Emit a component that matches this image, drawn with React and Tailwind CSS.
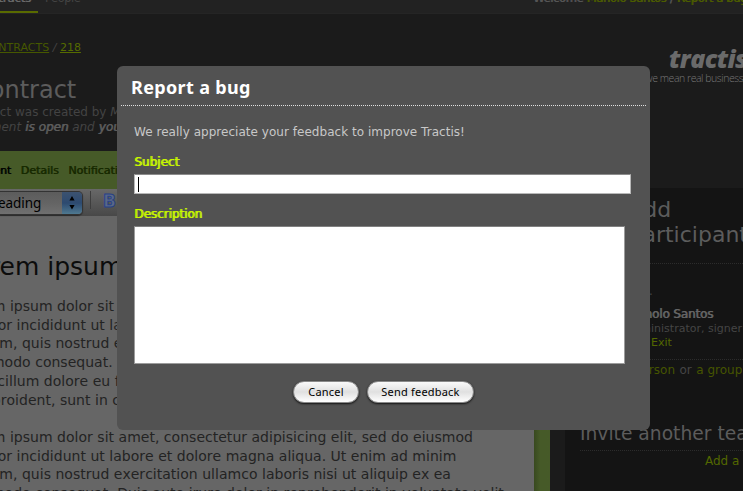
const faux = "[text-shadow:0.7px_0_0_currentColor]";

function Dotted({ className = "" }) {
  return <div className={`h-px border-t border-dotted border-[#2c2c2c] ${className}`} />;
}

function TopBar() {
  return (
    <header className="flex h-[14px] items-start justify-between overflow-hidden border-b border-[#252525] bg-[#222] text-[11.4px] leading-[16px]">
      <nav className="flex h-[13px] whitespace-nowrap">
        <div className="h-[13px] w-[38px] border-b-2 border-[#596b00]">
          <div className={`-mt-[10px] -ml-[24px] text-[#686868] ${faux}`}>Contracts</div>
        </div>
        <div className="-mt-[10px] ml-[7px] tracking-[-0.4px] text-[#444]">People</div>
      </nav>
      <div
        className={`-mt-[10px] flex w-[210px] gap-[3.5px] whitespace-nowrap tracking-[-0.3px] text-[#555] ${faux}`}
      >
        <span>Welcome</span>
        <span className="text-[#4c5c00]">Manolo Santos</span>
        <span>/</span>
        <span className="text-[#4c5c00]">Report a bug</span>
      </div>
    </header>
  );
}

function Masthead() {
  return (
    <section className="flex h-[137px] justify-between whitespace-nowrap">
      <div className="pt-[26px]">
        <div className="-ml-[18px] flex gap-[3.5px] text-[11px] leading-[16px] text-[#444]">
          <a className="text-[#465800] underline">CONTRACTS</a>
          <span className="italic">/</span>
          <a className="text-[#566c00] underline">218</a>
        </div>
        <h1 className="mt-[20px] -ml-[27px] text-[24px] leading-[28px] text-[#5c5c5c]">Contract</h1>
        <p className="-ml-[67px] pt-px text-[12px] leading-[15px] text-[#434343]">
          This contract was created by <i className="text-[#444]">Manolo</i>
        </p>
        <p className="-ml-[41px] text-[12px] leading-[15px] text-[#434343] italic">
          Document <span className={`text-[#5c5c5c] ${faux}`}>is open</span> and{" "}
          <span className={`text-[#5c5c5c] ${faux}`}>you</span>
        </p>
      </div>
      <div className="w-[98px] pt-[30px] font-['Open_Sans',sans-serif]">
        <div className="ml-[24px] text-[25px] leading-[28px] font-extrabold tracking-[-0.6px] text-[#6a6a6a] italic">
          tractis
        </div>
        <div className="-mt-px text-[10.5px] leading-[14px] font-light tracking-[-0.45px] text-[#777]">
          we mean real business
        </div>
      </div>
    </section>
  );
}

function Toolbar() {
  return (
    <div className="flex h-[27px] items-start bg-linear-to-b from-[#686868] to-[#484848] pt-[2px]">
      <div className="flex h-[24px] w-[83px] overflow-hidden rounded-r-[5px] border border-l-0 border-[#333] bg-linear-to-b from-[#5c5c5c] via-[#646464] to-[#707070] shadow-[0_1px_1px_#2b2b2b]">
        <div className="-ml-[12px] w-[74px] font-['Noto_Sans',sans-serif] text-[13.5px] leading-[23px] tracking-[-0.05px] text-black">
          Heading
        </div>
        <div className="flex flex-1 items-center justify-center bg-linear-to-b from-[#3c5270] via-[#2d4a70] to-[#4f7990]">
          <svg width="6" height="14" viewBox="0 0 6 14" fill="#000">
            <path d="M3 0 5.6 4.6H.4zM3 13.6 5.6 9H.4z" />
          </svg>
        </div>
      </div>
      <div className="ml-[7px] h-[18px] w-px bg-[#3d3d3d]" />
      <div className="ml-[12px] text-[17px] leading-[20px] font-bold text-[#5a6987] [-webkit-text-stroke:1px_#27418a]">
        B
      </div>
    </div>
  );
}

const lines = [
  "Lorem ipsum dolor sit amet, consectetur adipisicing elit, sed do eiusmod",
  "tempor incididunt ut labore et dolore magna aliqua. Ut enim ad minim",
  "veniam, quis nostrud exercitation ullamco laboris nisi ut aliquip ex ea",
  "commodo consequat. Duis aute irure dolor in reprehenderit in voluptate velit",
  "esse cillum dolore eu fugiat nulla pariatur. Excepteur sint occaecat cupidatat",
  "non proident, sunt in culpa qui officia deserunt mollit anim id est laborum.",
];

function Paragraph({ text }) {
  return (
    <p className="mb-[18.7px]">
      {text.map((line) => (
        <span key={line} className="block">
          {line}
        </span>
      ))}
    </p>
  );
}

function Editor() {
  return (
    <main className="flex w-[550px] flex-col">
      <div
        className={`flex h-[38px] shrink-0 gap-[9.5px] bg-[#465a28] pt-[12px] text-[11px] leading-[16px] text-[#172900] ${faux}`}
      >
        <span className="-ml-[46px] w-[57px] text-right text-black">Document</span>
        <span>Details</span>
        <span>Notifications</span>
      </div>
      <div className="flex min-h-0 flex-1">
        <div className="w-[534px] overflow-hidden bg-[#666]">
          <Toolbar />
          <div className="-ml-[39px] pt-[35px] whitespace-nowrap">
            <h2 className="text-[25px] leading-[32px] text-[#0c0c0c]">Lorem ipsum</h2>
            <div className="mt-[14px] text-[14px] leading-[18.7px] tracking-[0.02px] text-[#232323] [font-kerning:none]">
              <Paragraph text={lines} />
              <Paragraph text={lines.slice(0, 4)} />
            </div>
          </div>
        </div>
        <div className="w-[16px] bg-linear-to-r from-[#38491f] to-[#465a28] to-40%" />
      </div>
    </main>
  );
}

function Sidebar() {
  return (
    <aside className="mt-[37px] ml-[15px] w-[178px] overflow-hidden bg-[#141414] pt-[9px] pl-[15px] text-[12px] leading-[16px] whitespace-nowrap text-[#454545]">
      <h3 className="pl-[48.5px] text-[22px] leading-[25px] text-[#5c5c5c]">
        Add
        <br />
        participants
      </h3>
      <Dotted className="mt-[16px]" />
      <div className="mt-[19px] pl-[69px]">.</div>
      <div className={`mt-[7px] pl-[47px] tracking-[-0.15px] text-[#656565] ${faux}`}>Manolo Santos</div>
      <div className="pl-[46px] text-[11px] leading-[14px]">Administrator, signer</div>
      <div className="pl-[71px] text-[11px] leading-[14px] text-[#536700]">Exit</div>
      <Dotted className="mt-[9px]" />
      <div className="mt-[2px] pl-[29px] text-[#465500]">
        <span className="inline-block w-[66px] text-right">a person</span>
        <span className="px-[4.5px] text-[#454545]">or</span>
        <span>a group</span>
      </div>
      <h3 className="mt-[44px] text-[18.7px] leading-[24px] text-[#5c5c5c]">Invite another team</h3>
      <Dotted className="mt-[4px]" />
      <div className="mt-[2px] pl-[125px] text-[#536700]">Add a</div>
    </aside>
  );
}

function AquaButton({ children, className }) {
  return (
    <button
      className={`h-[22px] rounded-full border border-[#8a8a8a] bg-linear-to-b from-[#fafafa] via-[#e0e0e0] to-white pb-px font-['Noto_Sans',sans-serif] text-[11px] leading-[20px] tracking-[0.2px] text-black shadow-[0_1px_2px_#151515] ${className}`}
    >
      {children}
    </button>
  );
}

function BugDialog() {
  return (
    <div className="absolute top-[66px] left-[117px] h-[364px] w-[533px] rounded-[6px] bg-[#525252] px-[4px] pt-[9px]">
      <h2 className="border-b border-dotted border-[#e0e0e0] pb-[6px] pl-[10px] font-['Noto_Sans',sans-serif] text-[18px] leading-[24px] font-bold tracking-[0.35px] text-white">
        Report a bug
      </h2>
      <form className="flex flex-col items-start pt-[18px] pl-[13px] text-[12px] leading-[16px]">
        <p className="tracking-[0.03px] text-[#c8c8c8]">
          We really appreciate your feedback to improve Tractis!
        </p>
        <label className="mt-[14px] text-[#c8f500] [text-shadow:1px_0_0_currentColor]">Subject</label>
        <div className="mt-[4px] h-[20px] w-[497px] border border-[#b8b8b8] border-t-[#8c8c8c] bg-white pt-[1.5px] pl-[3px]">
          <div className="h-[15px] w-px bg-black" />
        </div>
        <label className="mt-[12px] tracking-[-0.05px] text-[#c8f500] [text-shadow:1px_0_0_currentColor]">
          Description
        </label>
        <div className="mt-[4px] h-[138px] w-[491px] border border-[#9c9c9c] border-t-[#808080] bg-white" />
        <div className="mt-[16.5px] ml-[159px] flex gap-[8px]">
          <AquaButton className="w-[66px]">Cancel</AquaButton>
          <AquaButton className="w-[107px]">Send feedback</AquaButton>
        </div>
      </form>
    </div>
  );
}

export default function App() {
  return (
    <div className="relative flex h-[491px] w-[743px] flex-col overflow-hidden bg-[#1b1b1b] font-['DejaVu_Sans',sans-serif]">
      <TopBar />
      <Masthead />
      <div className="flex min-h-0 flex-1">
        <Editor />
        <Sidebar />
      </div>
      <BugDialog />
    </div>
  );
}
